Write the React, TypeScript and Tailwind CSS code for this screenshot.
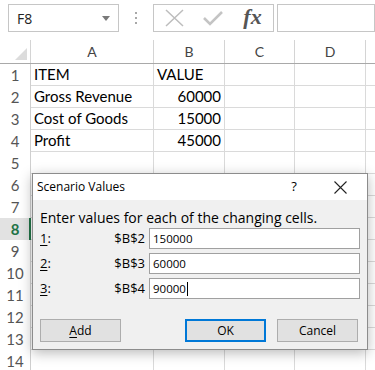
import React from "react";

const rows: { n: number; a?: string; b?: string; bAlign?: "left" | "right" }[] = [
  { n: 1, a: "ITEM", b: "VALUE", bAlign: "left" },
  { n: 2, a: "Gross Revenue", b: "60000", bAlign: "right" },
  { n: 3, a: "Cost of Goods", b: "15000", bAlign: "right" },
  { n: 4, a: "Profit", b: "45000", bAlign: "right" },
  { n: 5 },
  { n: 6 },
  { n: 7 },
  { n: 8 },
  { n: 9 },
  { n: 10 },
  { n: 11 },
  { n: 12 },
  { n: 13 },
  { n: 14 },
];

function U({ c }: { c: string }) {
  return <span className="underline underline-offset-2">{c}</span>;
}

export default function App() {
  return (
    <div className="relative w-[375px] h-[370px] overflow-hidden bg-white font-['Lato',sans-serif] text-black">
      {/* formula bar */}
      <div className="flex items-start h-[40px] pt-[4px]">
        <div className="ml-[8px] w-[111px] h-[28px] border border-[#c6c6c6] flex items-center justify-between pl-[8px] pr-[8px] font-['Open_Sans',sans-serif] text-[14px] text-[#222]">
          <span>F8</span>
          <svg width="8" height="5" viewBox="0 0 8 5">
            <path d="M0 0 L8 0 L4 5 Z" fill="#7a7a7a" />
          </svg>
        </div>
        <div className="w-[34px] h-[28px] flex flex-col items-center justify-center gap-[3px]">
          <div className="w-[2px] h-[2px] bg-[#a8a8a8]" />
          <div className="w-[2px] h-[2px] bg-[#a8a8a8]" />
          <div className="w-[2px] h-[2px] bg-[#a8a8a8]" />
        </div>
        <div className="w-[121px] h-[28px] border border-[#c6c6c6] flex items-center">
          <div className="w-[40px] flex justify-center">
            <svg width="21" height="18" viewBox="0 0 21 18">
              <path d="M2 1 L19 17 M19 1 L2 17" stroke="#bdbdbd" strokeWidth="1.5" />
            </svg>
          </div>
          <div className="w-[38px] flex justify-center">
            <svg width="22" height="16" viewBox="0 0 22 16">
              <path d="M2 8 L8 14 L20 2" stroke="#c4c4c4" strokeWidth="2.6" fill="none" />
            </svg>
          </div>
          <div className="flex-1 flex justify-center font-['Liberation_Serif',serif] italic font-bold text-[22px] text-[#555] leading-none pb-[2px]">
            fx
          </div>
        </div>
        <div className="ml-[3px] w-[98px] h-[28px] border border-[#c6c6c6]" />
      </div>

      {/* column headers */}
      <div className="flex h-[24px] border-b border-[#a9a9a9] text-[14px] text-[#444]">
        <div className="w-[31px] border-r border-[#d4d4d4] flex items-end justify-end pr-[3px] pb-[3px]">
          <svg width="12" height="12" viewBox="0 0 12 12">
            <path d="M12 0 L12 12 L0 12 Z" fill="#dcdcdc" />
          </svg>
        </div>
        <div className="w-[123px] border-r border-[#d4d4d4] flex items-center justify-center">A</div>
        <div className="w-[71px] border-r border-[#d4d4d4] flex items-center justify-center">B</div>
        <div className="w-[70px] border-r border-[#d4d4d4] flex items-center justify-center">C</div>
        <div className="w-[71px] border-r border-[#d4d4d4] flex items-center justify-center">D</div>
        <div className="flex-1" />
      </div>

      {/* grid rows */}
      {rows.map((r) => {
        const sel = r.n === 8;
        return (
          <div key={r.n} className="flex h-[22px] text-[15px]">
            <div
              className={
                sel
                  ? "w-[31px] border-r-2 border-[#217346] bg-[#e2e2e2] flex items-center justify-center text-[15px] font-bold text-[#217346] pl-[1px]"
                  : "w-[31px] border-r border-[#cfcfcf] flex items-center justify-center text-[15px] text-[#555]"
              }
            >
              {r.n}
            </div>
            <div className="w-[123px] border-r border-b border-[#dadada] flex items-center pl-[3px]">{r.a}</div>
            <div
              className={
                "w-[71px] border-r border-b border-[#dadada] flex items-center " +
                (r.bAlign === "right" ? "justify-end pr-[3px]" : "pl-[3px]")
              }
            >
              {r.b}
            </div>
            <div className="w-[70px] border-r border-b border-[#dadada]" />
            <div className="w-[71px] border-r border-b border-[#dadada]" />
            <div className="flex-1 border-b border-[#dadada]" />
          </div>
        );
      })}

      {/* dialog */}
      <div className="absolute left-[32px] top-[173px] w-[336px] h-[177px] border border-[#8c8c8c] bg-[#f0f0f0] flex flex-col shadow-[0_3px_12px_rgba(0,0,0,0.28)] font-['Open_Sans',sans-serif] text-[12px] text-black">
        <div className="h-[26px] bg-white flex items-center pl-[4px] text-[12px]">
          <span className="flex-1">Scenario Values</span>
          <span className="w-[20px] text-center text-[13px] mr-[30px]">?</span>
          <svg width="13" height="13" viewBox="0 0 13 13" className="mr-[20px]">
            <path d="M0.5 0.5 L12.5 12.5 M12.5 0.5 L0.5 12.5" stroke="#222" strokeWidth="1.1" />
          </svg>
        </div>
        <div className="flex-1 flex flex-col px-[7px] pt-[8px]">
          <div className="h-[18px] flex items-center text-[14px]">Enter values for each of the changing cells.</div>
          <div className="flex flex-col gap-[4px] mt-[2px]">
            {[
              { k: "1", c: "$B$2", v: "150000" },
              { k: "2", c: "$B$3", v: "60000" },
              { k: "3", c: "$B$4", v: "90000" },
            ].map((it, i) => (
              <div key={it.k} className="flex items-center h-[21px]">
                <div className="w-[40px] text-[13px]">
                  <U c={it.k} />:
                </div>
                <div className="w-[65px] text-right text-[13px]">{it.c}</div>
                <div className="ml-[4px] w-[211px] h-[21px] bg-white border border-[#a0a0a0] flex items-center pl-[3px] text-[11.5px]">
                  {it.v}
                  {i === 2 && <span className="inline-block w-[1px] h-[14px] bg-black ml-[1px]" />}
                </div>
              </div>
            ))}
          </div>
          <div className="flex justify-between mt-[20px] pr-[2px]">
            <div className="w-[81px] h-[23px] bg-[#e1e1e1] border border-[#adadad] flex items-center justify-center">
              <span>
                <U c="A" />
                dd
              </span>
            </div>
            <div className="flex gap-[11px]">
              <div className="w-[81px] h-[23px] bg-[#e1e1e1] border-2 border-[#0078d7] flex items-center justify-center">OK</div>
              <div className="w-[81px] h-[23px] bg-[#e1e1e1] border border-[#adadad] flex items-center justify-center">Cancel</div>
            </div>
          </div>
        </div>
      </div>
    </div>
  );
}
